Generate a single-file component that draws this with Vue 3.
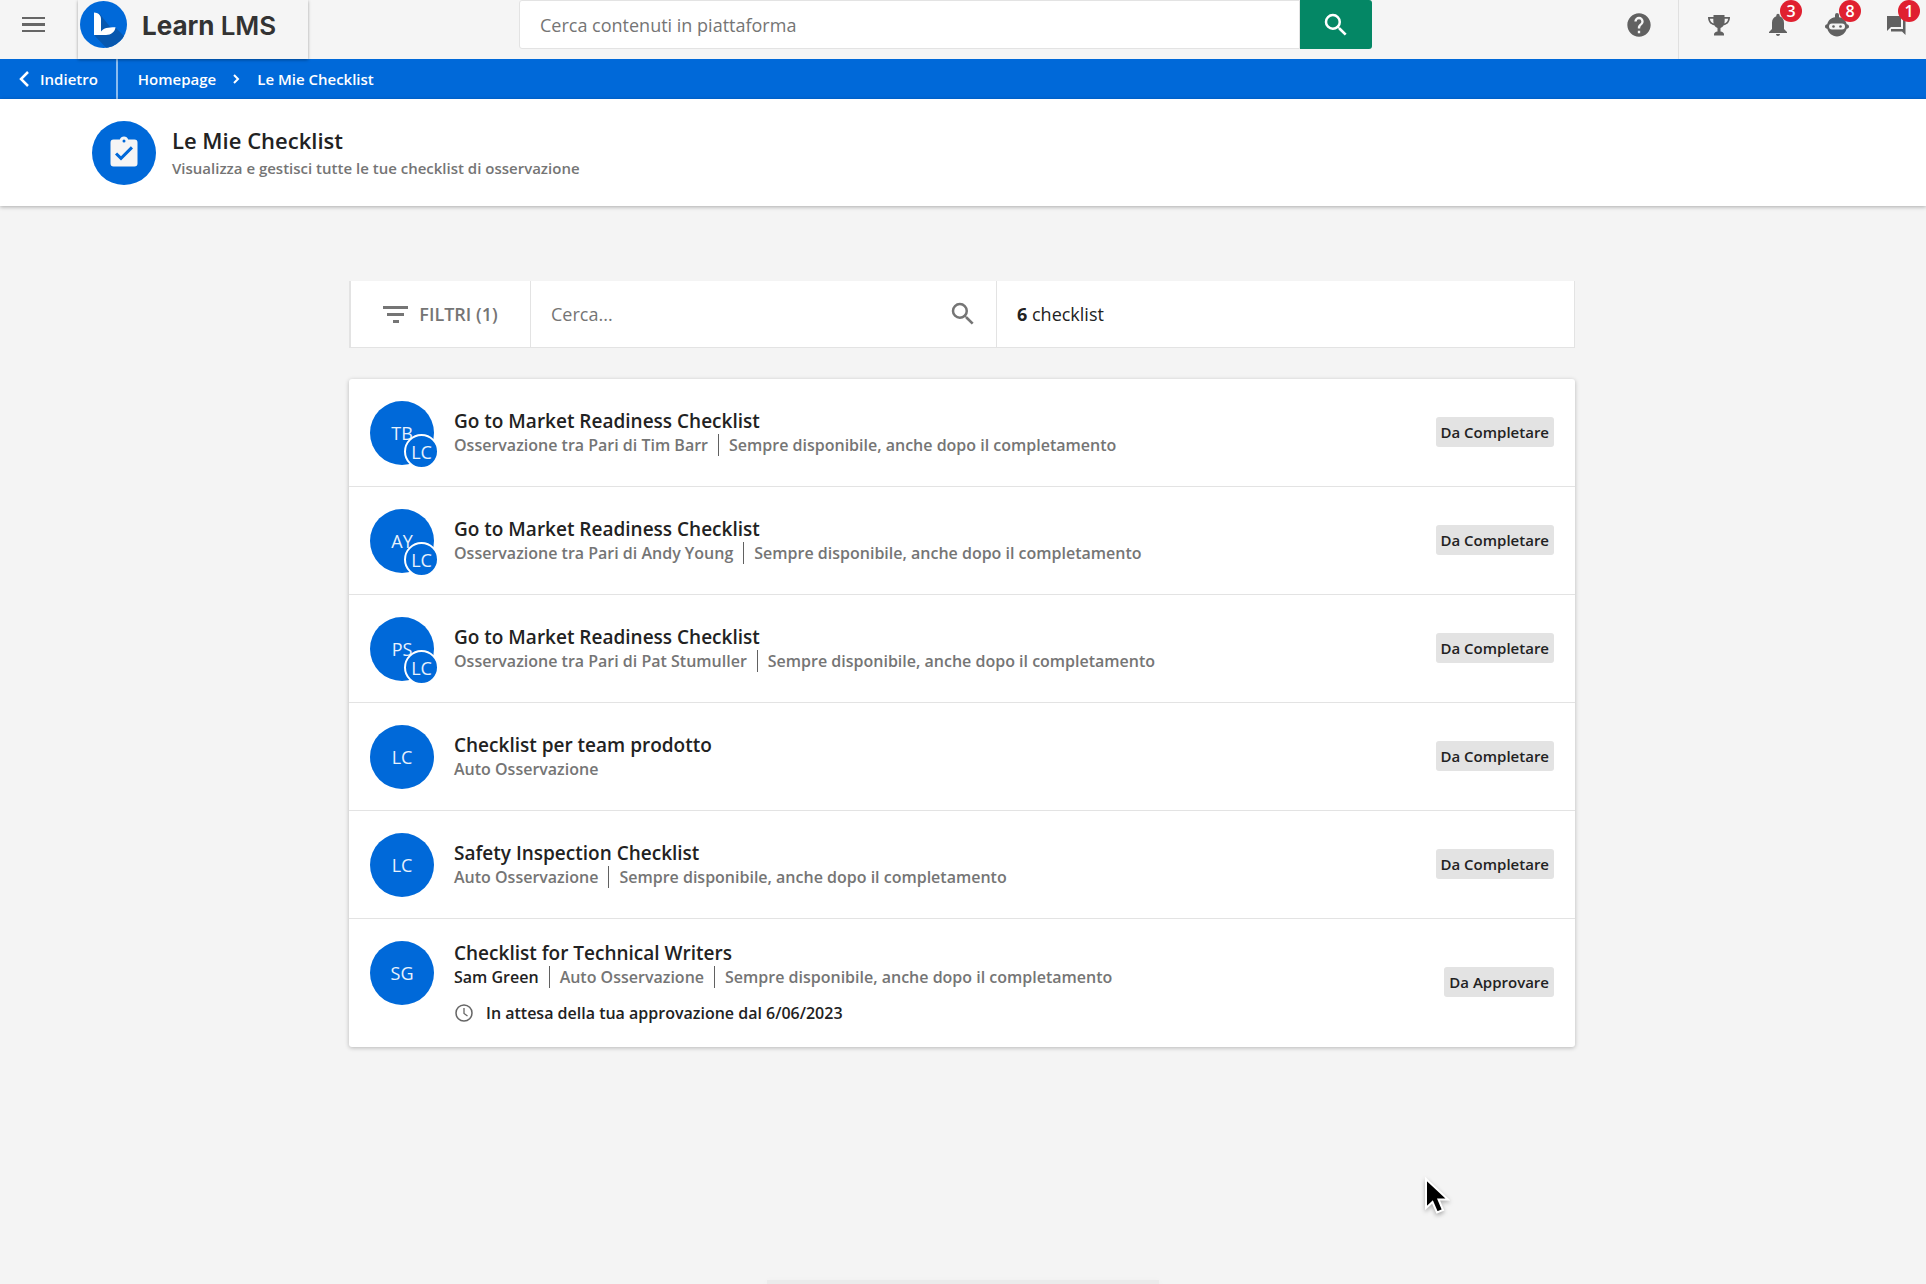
<script setup>
const notifications = [
  { id: 'trophy', label: 'Riconoscimenti', count: 0 },
  { id: 'bell', label: 'Notifiche', count: 3 },
  { id: 'robot', label: 'Assistente', count: 8 },
  { id: 'chat', label: 'Messaggi', count: 1 },
]

const ALWAYS = 'Sempre disponibile, anche dopo il completamento'

const checklists = [
  { id: 1, title: 'Go to Market Readiness Checklist', initials: 'TB', observer: 'LC', meta: ['Osservazione tra Pari di Tim Barr', ALWAYS], status: 'Da Completare' },
  { id: 2, title: 'Go to Market Readiness Checklist', initials: 'AY', observer: 'LC', meta: ['Osservazione tra Pari di Andy Young', ALWAYS], status: 'Da Completare' },
  { id: 3, title: 'Go to Market Readiness Checklist', initials: 'PS', observer: 'LC', meta: ['Osservazione tra Pari di Pat Stumuller', ALWAYS], status: 'Da Completare' },
  { id: 4, title: 'Checklist per team prodotto', initials: 'LC', meta: ['Auto Osservazione'], status: 'Da Completare' },
  { id: 5, title: 'Safety Inspection Checklist', initials: 'LC', meta: ['Auto Osservazione', ALWAYS], status: 'Da Completare' },
  { id: 6, title: 'Checklist for Technical Writers', initials: 'SG', person: 'Sam Green', meta: ['Auto Osservazione', ALWAYS], waiting: 'In attesa della tua approvazione dal 6/06/2023', status: 'Da Approvare' },
]
</script>

<template>
  <div class="page">
    <header class="topbar">
      <button class="menu" type="button" aria-label="Menu">
        <svg width="23" height="15" viewBox="0 0 23 15"><path d="M0 0h23v2H0zM0 6h23v3H0zM0 13h23v2H0z" fill="#666" /></svg>
      </button>
      <a class="brand" href="#">
        <svg width="47" height="47" viewBox="0 0 47 47">
          <defs><clipPath id="disc"><circle cx="23.500" cy="23.500" r="23.500" /></clipPath></defs>
          <g clip-path="url(#disc)">
            <rect width="47" height="47" fill="#0069d9" />
            <path d="M19 12l12 15 5 0 14 14-18 12-17-18z" fill="#0757ae" />
          </g>
          <path d="M14 11.500c4 .3 7 2.300 7 6.500v12.500c3-3.500 6.500-4.200 14.500-4.200-.6 4.700-4.300 7.700-9.500 7.700h-12z" fill="#fff" />
        </svg>
        <span class="brand-name">Learn <span>LMS</span></span>
      </a>
      <form class="global-search" @submit.prevent>
        <input type="search" placeholder="Cerca contenuti in piattaforma" aria-label="Cerca contenuti in piattaforma" />
        <button type="submit" aria-label="Cerca">
          <svg width="30" height="30" viewBox="0 0 24 24" fill="#fff"><path d="M15.500 14h-.79l-.28-.27A6.470 6.470 0 0 0 16 9.500 6.500 6.500 0 1 0 9.500 16c1.610 0 3.090-.59 4.230-1.570l.27.28v.79l5 4.990L20.490 19zm-6 0A4.500 4.500 0 1 1 14 9.500 4.500 4.500 0 0 1 9.500 14z" /></svg>
        </button>
      </form>
      <nav class="actions" aria-label="Strumenti">
        <button class="help" type="button" aria-label="Aiuto">
          <svg width="28" height="28" viewBox="0 0 24 24"><path d="M12 2C6.480 2 2 6.480 2 12s4.480 10 10 10 10-4.480 10-10S17.520 2 12 2zm1 17h-2v-2h2v2zm2.070-7.750l-.9.920C13.450 12.900 13 13.500 13 15h-2v-.5c0-1.100.45-2.100 1.170-2.830l1.240-1.260c.37-.36.59-.86.59-1.410a2 2 0 1 0-4 0H8a4 4 0 1 1 8 0c0 .88-.36 1.680-.93 2.250z" /></svg>
        </button>
        <button v-for="item in notifications" :key="item.id" class="action" type="button" :aria-label="item.label">
          <svg v-if="item.id === 'trophy'" width="24" height="24" viewBox="0 0 24 24"><path fill-rule="evenodd" d="M6.500 2h11v2H23c0 5-2.500 7.500-6.300 8.300-.9 1.500-1.900 2.300-3.200 2.700v3.500c2 .3 3.500 1.300 3.500 3v1H7v-1c0-1.700 1.500-2.700 3.500-3V15c-1.300-.4-2.300-1.200-3.200-2.700C3.500 11.500 1 9 1 4h5.500zM2.900 5.700c.3 2.400 1.500 3.900 3.700 4.700-.3-1.500-.3-3-.3-4.700zm18.200 0h-3.400c0 1.700 0 3.200-.3 4.700 2.200-.8 3.400-2.300 3.700-4.700z" /></svg>
          <svg v-else-if="item.id === 'bell'" width="24" height="24" viewBox="0 0 24 24"><path d="M10 21h4c0 1.100-.9 2-2 2s-2-.9-2-2zM3 20v-1l3-3V10c0-3.500 1.500-6 4.300-6.800V2.500a1.700 1.700 0 0 1 3.400 0v.7C16.500 4 18 6.500 18 10v6l3 3v1z" /></svg>
          <svg v-else-if="item.id === 'robot'" width="26" height="26" viewBox="0 0 26 26"><path fill-rule="evenodd" d="M11 5.200V3a2 2 0 0 1 4 0v2.200c4 .5 7 3.300 7.800 7 1.500.2 2.200 1 2.200 2.300s-.8 2.200-2.300 2.300C21.500 21 17.800 24.500 13 24.500S4.500 21 3.300 16.800C1.800 16.700 1 15.800 1 14.500s.7-2.100 2.200-2.300c.8-3.700 3.800-6.500 7.800-7zM8 11.500a3 3 0 0 0 0 6h10a3 3 0 0 0 0-6z" /><circle cx="9.500" cy="14.500" r="1.300" /><circle cx="16.500" cy="14.500" r="1.300" /></svg>
          <svg v-else width="24" height="24" viewBox="0 0 24 24"><path d="M3 3h14v11H7l-4 4z" /><path d="M19 6h2.500v16L18 18.500H7V16h12z" /></svg>
          <span v-if="item.count" class="count">{{ item.count }}</span>
        </button>
      </nav>
    </header>

    <nav class="breadcrumb" aria-label="Percorso">
      <a class="back" href="#">
        <svg width="10" height="16" viewBox="0 0 10 16"><path d="M9 1L2 8l7 7" fill="none" stroke="#fff" stroke-width="2.500" /></svg>
        Indietro
      </a>
      <a href="#">Homepage</a>
      <svg width="7" height="10" viewBox="0 0 7 10"><path d="M1 1l4 4-4 4" fill="none" stroke="#fff" stroke-width="2" /></svg>
      <a href="#" aria-current="page">Le Mie Checklist</a>
    </nav>

    <section class="heading">
      <span class="heading-icon">
        <svg width="36" height="36" viewBox="0 0 24 24"><path fill="#f5f5f5" d="M19 3h-4.180a3 3 0 0 0-5.640 0H5a2 2 0 0 0-2 2v14a2 2 0 0 0 2 2h14a2 2 0 0 0 2-2V5a2 2 0 0 0-2-2zm-7 0a1 1 0 1 1 0 2 1 1 0 0 1 0-2zm-2 14l-4-4 1.410-1.410L10 14.170l6.590-6.590L18 9z" /></svg>
      </span>
      <div>
        <h1>Le Mie Checklist</h1>
        <p>Visualizza e gestisci tutte le tue checklist di osservazione</p>
      </div>
    </section>

    <main class="content">
      <div class="filters">
        <button class="filter-button" type="button">
          <svg width="25" height="17" viewBox="0 0 25 17"><path d="M0 0h25v3H0zM4 7h17v3H4zM10 14h6v3h-6z" fill="#757575" /></svg>
          FILTRI (1)
        </button>
        <form class="list-search" @submit.prevent>
          <input type="search" placeholder="Cerca..." aria-label="Cerca checklist" />
          <button type="submit" aria-label="Cerca">
            <svg width="30" height="30" viewBox="0 0 24 24" fill="#757575"><path d="M15.500 14h-.79l-.28-.27A6.470 6.470 0 0 0 16 9.500 6.500 6.500 0 1 0 9.500 16c1.610 0 3.090-.59 4.230-1.570l.27.28v.79l5 4.990L20.490 19zm-6 0A4.500 4.500 0 1 1 14 9.500 4.500 4.500 0 0 1 9.500 14z" /></svg>
          </button>
        </form>
        <p class="total"><b>6</b> checklist</p>
      </div>

      <ul class="list">
        <li v-for="item in checklists" :key="item.id" class="row">
          <span class="avatar">
            {{ item.initials }}
            <span v-if="item.observer" class="observer">{{ item.observer }}</span>
          </span>
          <div class="info">
            <h2>{{ item.title }}</h2>
            <p class="meta">
              <span v-if="item.person" class="person">{{ item.person }}</span>
              <span v-for="part in item.meta" :key="part">{{ part }}</span>
            </p>
            <p v-if="item.waiting" class="waiting">
              <svg width="20" height="20" viewBox="0 0 20 20" fill="none" stroke="#666"><circle cx="10" cy="10" r="8" stroke-width="1.500" /><path d="M10 5v5.500l3.500 2.500" stroke-width="1.300" /></svg>
              {{ item.waiting }}
            </p>
          </div>
          <span class="status">{{ item.status }}</span>
        </li>
      </ul>
    </main>

    <div class="drawer-edge"></div>
    <svg class="pointer" width="26" height="40" viewBox="0 0 26 40"><path d="M2 2v29l6.500-6 4.500 10.500 6-2.500-4.500-10.500H24z" fill="#000" stroke="#fff" stroke-width="2" /></svg>
  </div>
</template>

<style>
body {
  margin: 0;
  background: #f4f4f4;
}
</style>

<style scoped>
* {
  box-sizing: border-box;
}

.page {
  position: relative;
  display: flex;
  flex-direction: column;
  min-height: 100vh;
  overflow: hidden;
  font-family: "Open Sans", "Noto Sans", sans-serif;
  font-size: 16px;
  color: #222;
}

h1,
h2,
p,
ul {
  margin: 0;
  padding: 0;
}

svg {
  display: block;
  flex: none;
}

a {
  color: inherit;
  text-decoration: none;
}

button {
  display: flex;
  align-items: center;
  justify-content: center;
  padding: 0;
  border: 0;
  background: none;
  font: inherit;
  cursor: pointer;
}

input {
  min-width: 0;
  padding: 0 20px;
  border: 0;
  border-radius: 0;
  outline: 0;
  background: #fff;
  font: inherit;
  font-size: 18px;
  appearance: none;
}

input::placeholder {
  color: #757575;
  opacity: 1;
}

.topbar {
  display: flex;
  height: 59px;
  background: #f5f5f5;
}

.menu {
  width: 78px;
  height: 49px;
  padding-right: 11px;
}

.brand {
  position: relative;
  display: flex;
  gap: 15px;
  width: 230px;
  padding: 1px 2px;
  box-shadow: 0 1px 3px rgba(0, 0, 0, 0.35);
}

.brand-name {
  font-family: Inter, "Open Sans", sans-serif;
  font-size: 26px;
  font-weight: 700;
  line-height: 50px;
  color: #333;
  white-space: nowrap;
}

.brand-name span {
  font-weight: 600;
}

.global-search {
  display: flex;
  flex: 1;
  height: 49px;
  margin: 0 236px 0 211px;
}

.global-search input {
  flex: 1;
  border: 1px solid #e3e3e3;
  border-radius: 3px 0 0 3px;
}

.global-search button {
  width: 72px;
  border-radius: 0 3px 3px 0;
  background: #048765;
}

.actions {
  display: flex;
  padding-right: 1px;
  fill: #616161;
}

.help {
  width: 71px;
  padding: 0 8px 10px 0;
  border-right: 1px solid #e0e0e0;
  margin-right: 10px;
}

.action {
  position: relative;
  width: 59px;
  height: 49px;
}

.count {
  position: absolute;
  top: 0;
  left: 32px;
  width: 22px;
  height: 22px;
  border-radius: 50%;
  background: #e02030;
  font-size: 16px;
  font-weight: 600;
  line-height: 22px;
  color: #fff;
}

.breadcrumb {
  display: flex;
  align-items: center;
  gap: 17px;
  height: 40px;
  background: #0069d9;
  font-weight: 600;
  font-size: 15px;
  color: #fff;
}

.back {
  display: flex;
  align-items: center;
  gap: 11px;
  height: 40px;
  padding: 0 18px 0 19px;
  margin-right: 3px;
  border-right: 2px solid #8abcf0;
}

.heading {
  display: flex;
  align-items: center;
  gap: 16px;
  height: 107px;
  padding: 0 92px;
  background: #fff;
  box-shadow: 0 1px 4px rgba(0, 0, 0, 0.3);
}

.heading-icon,
.avatar {
  display: flex;
  align-items: center;
  justify-content: center;
  flex: none;
  width: 64px;
  height: 64px;
  border-radius: 50%;
  background: #0069d9;
}

.heading h1 {
  font-size: 22px;
  font-weight: 600;
  line-height: 30px;
}

.heading p {
  font-size: 15px;
  font-weight: 600;
  line-height: 26px;
  color: #757575;
}

.content {
  width: 100%;
  max-width: 1228px;
  margin: 0 auto;
  padding: 75px 2px 60px 0;
}

.filters {
  display: flex;
  height: 67px;
  margin-bottom: 31px;
  border: solid #e3e3e3;
  border-width: 0 1px 1px 2px;
  background: #fff;
}

.filter-button {
  gap: 11px;
  width: 179px;
  font-size: 18px;
  font-weight: 600;
  color: #757575;
}

.list-search {
  display: flex;
  width: 467px;
  border: solid #e3e3e3;
  border-width: 0 1px;
}

.list-search input {
  flex: 1;
}

.list-search button {
  width: 66px;
}

.total {
  padding-left: 20px;
  font-size: 18px;
  line-height: 66px;
}

.list {
  list-style: none;
  border-radius: 3px;
  background: #fff;
  box-shadow: 0 1px 4px rgba(0, 0, 0, 0.25);
}

.row {
  display: flex;
  align-items: center;
  gap: 20px;
  min-height: 108px;
  padding: 0 21px 2px;
  border-bottom: 1px solid #e3e3e3;
}

.row:last-child {
  min-height: 128px;
  border-bottom: 0;
}

.avatar {
  position: relative;
  font-size: 18px;
  color: #e8f1fc;
}

.row .avatar {
  align-self: flex-start;
  margin-top: 22px;
}

.observer {
  position: absolute;
  top: 33px;
  left: 34px;
  width: 35px;
  height: 35px;
  border: 2px solid #fff;
  border-radius: 50%;
  background: #0069d9;
  line-height: 33px;
  text-align: center;
}

.info {
  flex: 1;
}

.info h2 {
  font-size: 19px;
  font-weight: 600;
  line-height: 26px;
}

.meta,
.waiting {
  display: flex;
  align-items: center;
  font-size: 16px;
  font-weight: 600;
  line-height: 22px;
}

.meta {
  color: #757575;
}

.meta span + span {
  margin-left: 10px;
  padding-left: 10px;
  border-left: 1px solid #616161;
}

.person {
  color: #222;
}

.waiting {
  gap: 12px;
  margin-top: 14px;
}

.status {
  padding: 0 5px;
  border-radius: 3px;
  background: #e3e3e3;
  font-size: 15px;
  font-weight: 600;
  line-height: 30px;
  white-space: nowrap;
}

.drawer-edge {
  width: 392px;
  height: 4px;
  margin: auto auto 0;
  background: #ebebeb;
  box-shadow: 0 3px 8px rgba(0, 0, 0, 0.06);
}

.pointer {
  position: absolute;
  top: 1177px;
  left: 1424px;
  filter: drop-shadow(0 2px 2px rgba(0, 0, 0, 0.3));
}
</style>
